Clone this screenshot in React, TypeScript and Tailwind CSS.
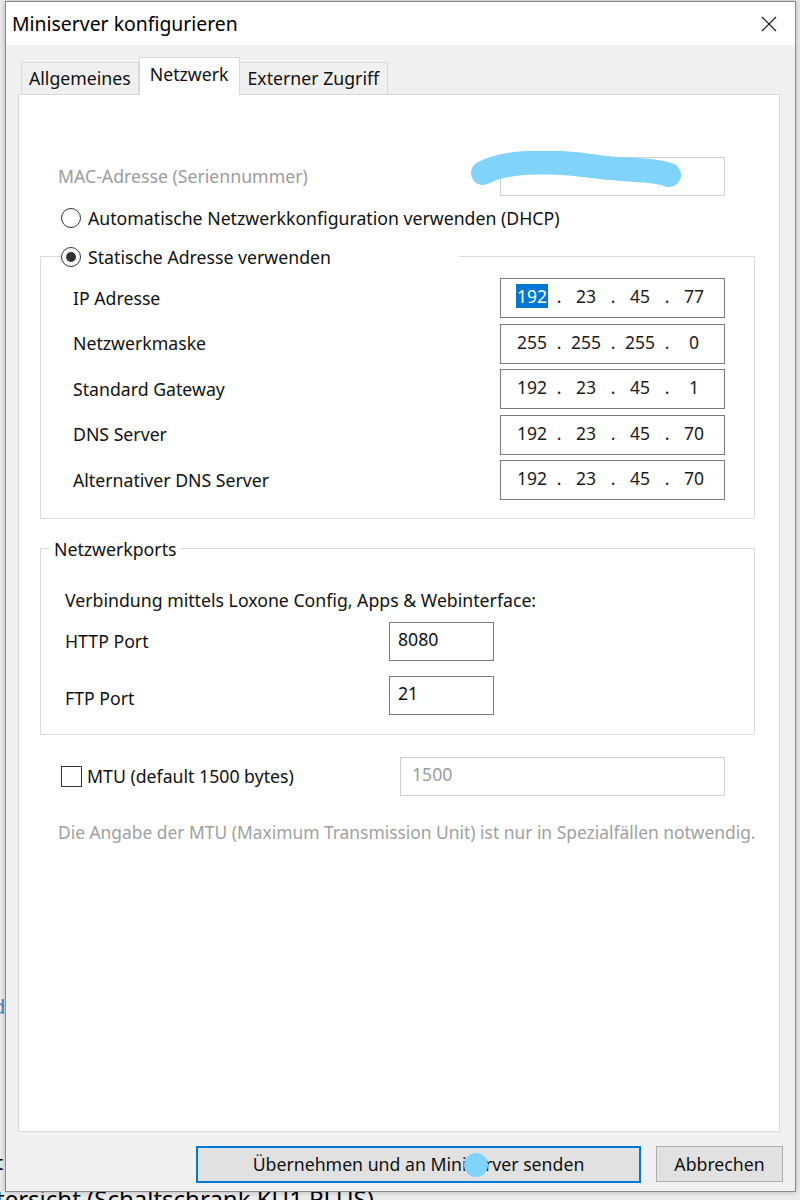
import React from "react";

const font = { fontFamily: '"Noto Sans", "Open Sans", sans-serif' };

function Radio({ checked }: { checked?: boolean }) {
  return (
    <span className="flex h-[20px] w-[20px] shrink-0 items-center justify-center rounded-full border border-[#333] bg-white">
      {checked && <span className="h-[10px] w-[10px] rounded-full bg-[#333]" />}
    </span>
  );
}

function IpField({ parts, selected }: { parts: string[]; selected?: boolean }) {
  return (
    <div className="flex h-[40px] w-[225px] items-center border border-[#7a7a7a] bg-white pb-[3px] pl-[15px] text-[17.5px] text-[#1a1a1a]">
      {parts.map((p, i) => (
        <React.Fragment key={i}>
          {i > 0 && <span className="w-[22px] text-center">.</span>}
          <span className="w-[32px] text-center">
            {i === 0 && selected ? (
              <span className="bg-[#0078d7] px-[1px] text-white">{p}</span>
            ) : (
              p
            )}
          </span>
        </React.Fragment>
      ))}
    </div>
  );
}

const rows: { label: string; parts: string[]; selected?: boolean }[] = [
  { label: "IP Adresse", parts: ["192", "23", "45", "77"], selected: true },
  { label: "Netzwerkmaske", parts: ["255", "255", "255", "0"] },
  { label: "Standard Gateway", parts: ["192", "23", "45", "1"] },
  { label: "DNS Server", parts: ["192", "23", "45", "70"] },
  { label: "Alternativer DNS Server", parts: ["192", "23", "45", "70"] },
];

export default function App() {
  return (
    <div className="relative h-[1200px] w-[800px] overflow-hidden bg-[#ececec]" style={font}>
      {/* window behind the dialog */}
      <div className="absolute left-[-4px] top-[1181px] text-[24px] leading-[36px] text-black">
        tersicht (Schaltschrank KU1 PLUS)
      </div>
      <div className="absolute left-[-6px] top-[682px] text-[20px] text-[#5a2a00]">l</div>
      <div className="absolute left-[-7px] top-[992px] text-[20px] text-[#3a8ac0]">d</div>
      <div className="absolute left-[-4px] top-[1148px] text-[20px] text-black">t</div>

      <div className="relative ml-[5px] mt-[1px] flex h-[1191px] w-[791px] flex-col border border-[#8a8a8a] bg-[#f0f0f0] shadow-[0_0_6px_rgba(0,0,0,0.25)]">
        {/* title bar */}
        <div className="flex h-[43px] items-center justify-between bg-white pl-[6px] pr-[18px]">
          <span className="text-[19.4px] text-black">Miniserver konfigurieren</span>
          <svg width="16" height="16" viewBox="0 0 16 16">
            <path d="M1 1 L15 15 M15 1 L1 15" stroke="#111" strokeWidth="1.1" fill="none" />
          </svg>
        </div>

        {/* tabs */}
        <div className="mt-[12px] flex items-end pl-[15px] text-[17.7px] text-[#111]">
          <div className="flex h-[32px] items-center border border-b-0 border-[#d9d9d9] bg-[#f0f0f0] px-[7px]">
            Allgemeines
          </div>
          <div className="relative z-10 mb-[-1px] flex h-[38px] items-center border border-b-0 border-[#d9d9d9] bg-white px-[10px] pb-[4px]">
            Netzwerk
          </div>
          <div className="flex h-[32px] items-center border border-b-0 border-l-0 border-[#d9d9d9] bg-[#f0f0f0] px-[8px]">
            Externer Zugriff
          </div>
        </div>

        {/* panel */}
        <div className="relative ml-[12px] mr-[15px] flex h-[1038px] flex-col border border-[#d9d9d9] bg-white text-[17.7px] text-[#111]">
          {/* MAC */}
          <div className="relative mt-[62px] flex h-[39px] items-center pl-[39px]">
            <span className="w-[442px] text-[#9c9c9c]">MAC-Adresse (Seriennummer)</span>
            <div className="h-[39px] w-[225px] border border-[#cfcfcf] bg-white" />
            <svg className="absolute left-[450px] top-[-6px]" width="220" height="42" viewBox="0 0 220 42">
              <path
                d="M14 22 C40 8, 90 10, 130 16 C160 20, 185 18, 200 24"
                stroke="#80d3fa"
                strokeWidth="24"
                strokeLinecap="round"
                fill="none"
              />
            </svg>
          </div>

          {/* DHCP */}
          <div className="mt-[9px] flex items-center gap-[7px] pl-[42px]">
            <Radio />
            <span>Automatische Netzwerkkonfiguration verwenden (DHCP)</span>
          </div>

          {/* static group */}
          <fieldset className="ml-[21px] mr-[24px] mt-[12px] h-[275px] border border-[#dcdcdc] pl-[32px]">
            <legend className="ml-[-12px] flex w-[398px] items-center gap-[7px] bg-white">
              <Radio checked />
              <span>Statische Adresse verwenden</span>
            </legend>
            <div className="mt-[8px] flex flex-col gap-[5.5px]">
              {rows.map((r) => (
                <div key={r.label} className="flex items-center">
                  <span className="w-[427px]">{r.label}</span>
                  <IpField parts={r.parts} selected={r.selected} />
                </div>
              ))}
            </div>
          </fieldset>

          {/* ports group */}
          <fieldset className="ml-[21px] mr-[24px] mt-[17px] h-[199px] border border-[#dcdcdc] pl-[24px]">
            <legend className="ml-[-15px] px-[4px]">Netzwerkports</legend>
            <div className="mt-[25px]">Verbindung mittels Loxone Config, Apps &amp; Webinterface:</div>
            <div className="mt-[8px] flex items-center">
              <span className="w-[324px]">HTTP Port</span>
              <div className="flex h-[39px] w-[105px] items-start border border-[#7a7a7a] bg-white px-[8px] pt-[3px]">8080</div>
            </div>
            <div className="mt-[15px] flex items-center">
              <span className="w-[324px] pt-[6px]">FTP Port</span>
              <div className="flex h-[39px] w-[105px] items-start border border-[#7a7a7a] bg-white px-[8px] pt-[3px]">21</div>
            </div>
          </fieldset>

          {/* MTU */}
          <div className="mt-[22px] flex items-center pl-[42px]">
            <span className="h-[21px] w-[21px] shrink-0 border border-[#333] bg-white" />
            <span className="ml-[5px] w-[313px]">MTU (default 1500 bytes)</span>
            <div className="flex h-[39px] w-[325px] items-center border border-[#cfcfcf] bg-white pb-[3px] pl-[11px] text-[#9c9c9c]">1500</div>
          </div>
          <div className="mt-[23px] pl-[39px] text-[17.4px] text-[#a0a0a0]">
            Die Angabe der MTU (Maximum Transmission Unit) ist nur in Spezialfällen notwendig.
          </div>
        </div>

        {/* buttons */}
        <div className="mt-[14px] flex justify-end gap-[15px] pr-[12px] text-[17.7px] text-[#111]">
          <div className="relative flex h-[37px] w-[445px] items-center justify-center border-2 border-[#0078d7] bg-[#e1e1e1]">
            Übernehmen und an Miniserver senden
            <span className="absolute left-[266px] top-[5px] h-[24px] w-[24px] rounded-full bg-[#80d3fa]" />
          </div>
          <div className="flex h-[36px] w-[127px] items-center justify-center border border-[#adadad] bg-[#e1e1e1]">
            Abbrechen
          </div>
        </div>
      </div>
    </div>
  );
}
